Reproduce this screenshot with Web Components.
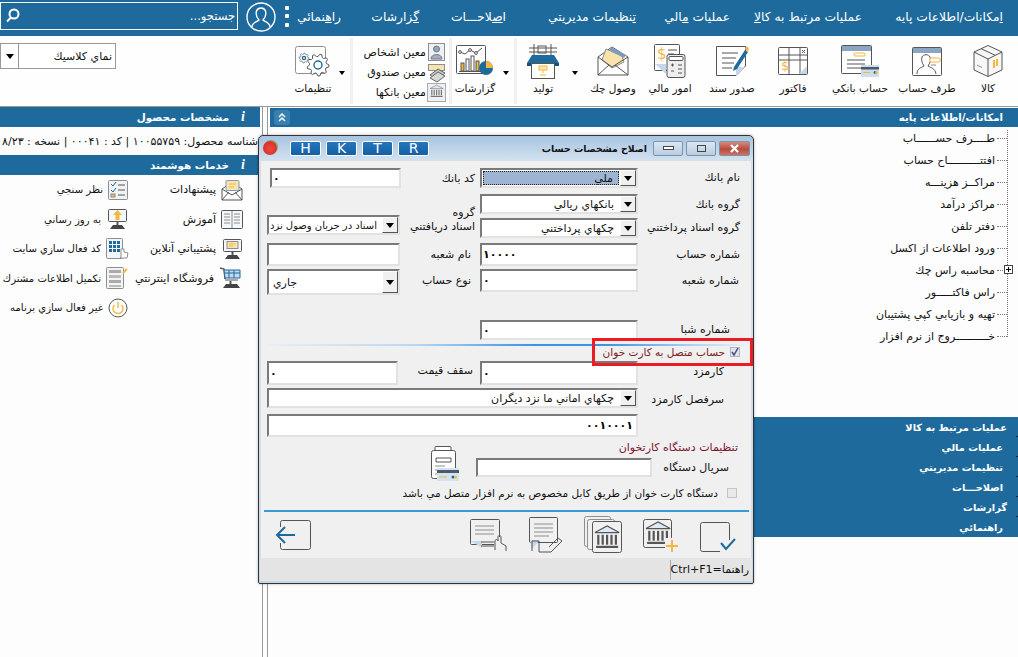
<!DOCTYPE html>
<html dir="rtl" lang="fa">
<head>
<meta charset="utf-8">
<title>حساب</title>
<style>
html,body{margin:0;padding:0;width:1018px;height:657px;overflow:hidden;background:#fdfdfd;font:11px "DejaVu Sans",sans-serif;color:#111}
</style>
</head>
<body>
<x-app>
  <x-topbar>
    <x-menu-item style="width:141px"><u>ا</u>مكانات/اطلاعات پايه</x-menu-item>
    <x-menu-item style="width:132px">عمليات مرتبط به كا<u>لا</u></x-menu-item>
    <x-menu-item style="width:94px">عمليات <u>م</u>الي</x-menu-item>
    <x-menu-item style="width:130px"><u>ت</u>نظيمات مديريتي</x-menu-item>
    <x-menu-item style="width:87px">ا<u>ص</u>لاحـــات</x-menu-item>
    <x-menu-item style="width:78px"><u>گ</u>زارشات</x-menu-item>
    <x-menu-item style="width:51px">را<u>ه</u>نمائي</x-menu-item>
    <x-userbox></x-userbox>
    <x-search>جستجو...</x-search>
  </x-topbar>
  <x-toolbar>
    <x-tool style="width:60px" icon="box">كالا</x-tool>
    <x-tool style="width:62px" icon="person">طرف حساب</x-tool>
    <x-tool style="width:72px" icon="bankacc">حساب بانكي</x-tool>
    <x-tool style="width:62px" icon="invoice">فاكتور</x-tool>
    <x-tool style="width:60px" icon="voucher">صدور سند</x-tool>
    <x-tool style="width:64px" icon="finance">امور مالي</x-tool>
    <x-tool style="width:50px" icon="envelope">وصول چك</x-tool>
    <x-caret style="width:26px"></x-caret>
    <x-tool style="width:38px" icon="shop">توليد</x-tool>
    <x-sep style="margin-right:7px"></x-sep>
    <x-caret style="width:16px"></x-caret>
    <x-tool style="width:46px" icon="reports">گزارشات</x-tool>
    <x-sep></x-sep>
    <x-mini-group>
      <x-mini icon="mperson">معين اشخاص</x-mini>
      <x-mini icon="mcash">معين صندوق</x-mini>
      <x-mini icon="mbank">معين بانكها</x-mini>
    </x-mini-group>
    <x-sep></x-sep>
    <x-caret style="width:16px"></x-caret>
    <x-tool style="width:42px" icon="settings">تنظيمات</x-tool>
    <x-combo class="theme" style="margin-inline-start:auto;align-self:start;margin-top:7px;width:116px;height:26px">نماي كلاسيك</x-combo>
  </x-toolbar>
  <x-workspace>
    <x-right-panel>
      <x-panel-head>امكانات/اطلاعات پايه<x-collapse slot="end"></x-collapse></x-panel-head>
      <x-tree>
        <x-tree-item>طــــرف حســــــاب</x-tree-item>
        <x-tree-item>افتتــــــــــاح حساب</x-tree-item>
        <x-tree-item>مراكــز هزينـــه</x-tree-item>
        <x-tree-item>مراكز درآمد</x-tree-item>
        <x-tree-item>دفتر تلفن</x-tree-item>
        <x-tree-item>ورود اطلاعات از اكسل</x-tree-item>
        <x-tree-item plus>محاسبه راس چك</x-tree-item>
        <x-tree-item>راس فاكتـــــور</x-tree-item>
        <x-tree-item>تهيه و بازيابي كپي پشتيبان</x-tree-item>
        <x-tree-item>خــــــــــروج از نرم افزار</x-tree-item>
      </x-tree>
      <x-accordion>
        <x-acc-row style="padding-right:11px">عمليات مرتبط به كالا</x-acc-row>
        <x-acc-row style="padding-right:15px">عمليات مالي</x-acc-row>
        <x-acc-row style="padding-right:15px">تنظيمات مديريتي</x-acc-row>
        <x-acc-row style="padding-right:15px">اصلاحـــات</x-acc-row>
        <x-acc-row style="padding-right:11px">گزارشات</x-acc-row>
        <x-acc-row style="padding-right:15px;background:none">راهنمائي</x-acc-row>
      </x-accordion>
    </x-right-panel>
    <x-splitter></x-splitter>
    <x-left-panel>
      <x-info-head>مشخصات محصول</x-info-head>
      <x-product>شناسه محصول: ۱۰۰۵۵۷۵۹ | كد : ۰۰۰۴۱ | نسخه : ۱۴۰۰/۰۸/۲۳</x-product>
      <x-info-head>خدمات هوشمند</x-info-head>
      <x-services>
        <x-service icon="sugg">پيشنهادات</x-service>
        <x-service class="l" icon="poll">نظر سنجي</x-service>
        <x-service icon="book">آموزش</x-service>
        <x-service class="l" icon="update">به روز رساني</x-service>
        <x-service icon="support">پشتيباني آنلاين</x-service>
        <x-service class="l" icon="keypad">كد فعال سازي سايت</x-service>
        <x-service icon="cart">فروشگاه اينترنتي</x-service>
        <x-service class="l" icon="stack">تكميل اطلاعات مشترك</x-service>
        <span></span>
        <x-service class="l" icon="power">غير فعال سازي برنامه</x-service>
      </x-services>
    </x-left-panel>
  </x-workspace>
  <x-dialog>
    <x-form>
      <x-lab style="padding-top:3px">نام بانك</x-lab>
      <x-combo class="sel" style="height:20px">ملي</x-combo>
      <x-lab class="m" style="padding-top:4px">كد بانك</x-lab>
      <x-input style="margin:0 -1px 0 0;height:20px;width:131px">۰</x-input>

      <x-lab style="padding-top:7px">گروه بانك</x-lab>
      <x-combo style="margin-top:3px;height:20px">بانكهاي ريالي</x-combo>
      <x-lab class="m" style="grid-row:span 2;padding-top:15px;line-height:14px">گروه<br>اسناد دريافتني</x-lab>
      <span></span>

      <x-lab style="padding-top:5px">گروه اسناد پرداختني</x-lab>
      <x-combo style="margin-top:2px;height:20px">چكهاي پرداختني</x-combo>
      <x-combo class="tight" style="margin-top:-1px;height:20px;font-size:10px">اسناد در جريان وصول نزد</x-combo>

      <x-lab style="padding-top:7px">شماره حساب</x-lab>
      <x-input style="margin-top:2px;height:23px">۱۰۰۰۰</x-input>
      <x-lab class="m" style="padding-top:7px;padding-right:9px">نام شعبه</x-lab>
      <x-input class="blank" style="margin-top:2px;height:23px"></x-input>

      <x-lab style="padding-top:7px;padding-right:9px">شماره شعبه</x-lab>
      <x-input style="margin-top:2px;height:23px">۰</x-input>
      <x-lab class="m" style="padding-top:7px;padding-right:9px">نوع حساب</x-lab>
      <x-combo class="start" style="margin-top:2px;height:26px">جاري</x-combo>

      <span style="grid-column:1/-1"></span>

      <x-lab style="padding-top:5px;padding-right:18px">شماره شبا</x-lab>
      <x-input style="margin-top:2px;height:20px">۰</x-input>
      <span></span><span></span>

      <x-divider></x-divider>
      <span style="grid-column:1/-1"></span>

      <x-lab style="padding-top:4px;padding-right:24px">كارمزد</x-lab>
      <x-input style="height:24px">۰</x-input>
      <x-lab class="m" style="padding-top:3px;padding-right:7px">سقف قيمت</x-lab>
      <x-input style="height:24px;margin-right:2px">۰</x-input>

      <x-lab style="padding-top:5px;padding-right:24px">سرفصل كارمزد</x-lab>
      <x-combo class="wide" style="margin-top:0;height:20px;grid-column:2/5">چكهاي اماني ما نزد ديگران</x-combo>

      <span></span>
      <x-input class="wide end" style="height:23px;grid-column:2/5">۰۰۱۰۰۰۱</x-input>
    </x-form>
    <x-card-section>
      <x-section-title>تنظيمات دستگاه كارتخوان</x-section-title>
      <x-serial-row>
        <x-lab style="width:77px;padding:3px 22px 0 0;box-sizing:content-box">سريال دستگاه</x-lab>
        <x-input class="blank" style="width:176px;height:19px"></x-input>
        <x-icon name="pos" style="margin:-12px 17px -12px 0"></x-icon>
      </x-serial-row>
      <x-check style="margin:10px 14px 0 0">دستگاه كارت خوان از طريق كابل مخصوص به نرم افزار متصل مي باشد</x-check>
    </x-card-section>
    <x-actions>
      <x-icon name="ok"></x-icon>
      <x-icon name="bankadd"></x-icon>
      <x-icon name="bankcopy"></x-icon>
      <x-icon name="docpen"></x-icon>
      <x-icon name="dochand"></x-icon>
      <x-icon name="back" style="margin-inline-start:auto"></x-icon>
    </x-actions>
    <x-statusbar>راهنما=Ctrl+F1</x-statusbar>
    <x-highlight slot="over"><x-check checked class="red">حساب متصل به كارت خوان</x-check></x-highlight>
  </x-dialog>
</x-app>
<script>
const S='#555',B='#1f6a9c',O='#f4b73f',L='#c6d7ec',G='#8e8e8e';
const line=(d,c=S,w=1)=>`<path d="${d}" fill="none" stroke="${c}" stroke-width="${w}"/>`;
const rect=(x,y,w,h,f='none',c=S,r=1)=>`<rect x="${x}" y="${y}" width="${w}" height="${h}" rx="${r}" fill="${f}" stroke="${c}"/>`;
const fill=(x,y,w,h,f)=>`<rect x="${x}" y="${y}" width="${w}" height="${h}" fill="${f}"/>`;
const dollar=(x,y,s=13)=>`<text x="${x}" y="${y}" font-size="${s}" font-family="DejaVu Sans" fill="${O}" direction="ltr">$</text>`;
function bank(x,y,s=1,c=S){let m=`<g transform="translate(${x} ${y}) scale(${s})"><path d="M0 6L11 0L22 6Z" fill="#dfe9f4" stroke="${c}"/>`;
  for(let i=0;i<5;i++)m+=`<path d="M${3+i*4} 8V17" stroke="${c}" stroke-width="2"/>`;
  return m+`<path d="M1 19H21" stroke="${c}" stroke-width="2"/></g>`;}
function gear(cx,cy,ro,ri,n,c,hole){let p=[];for(let i=0;i<n*4;i++){const a=i/(n*4)*Math.PI*2;const r=(i%4<2)?ro:ri;p.push((cx+r*Math.cos(a)).toFixed(1)+','+(cy+r*Math.sin(a)).toFixed(1));}
  return `<polygon points="${p.join(' ')}" fill="#fff" stroke="${c}"/><circle cx="${cx}" cy="${cy}" r="${hole}" fill="#fff" stroke="${B}" stroke-width="1.4"/>`;}
function monitor(inner){return rect(2.5,1.5,18,12,'#f4f7fb',S)+inner+line('M11.5 14V17',S,2)+`<path d="M4 21L7 17H16L19 21Z" fill="#444"/>`;}
const card=(x,y,w=18,h=11)=>fill(x,y,w,h,'#cfdcec')+fill(x,y+2,w,2.5,'#4a5a6a')+fill(x+2,y+7,7,1,O)+`<circle cx="${x+w-4}" cy="${y+7.5}" r="1.4" fill="${B}"/><circle cx="${x+w-2.5}" cy="${y+7.5}" r="1.4" fill="${O}"/>`;
const ICONS={
 box:[30,34,`<path d="M15 1.5L29 8V26L15 32.5L1 26V8Z" fill="#f7f7f7" stroke="${S}"/>`+line('M1 8L15 15L29 8M15 15V32.5M8 4.7L22 11.2')+line('M21 16V24M24 15V22',O,2)+line('M4 21L9 23.5',G)],
 person:[30,30,rect(.5,1.5,29,28,'#fff')+fill(1,2,28,5,'#8aa5c6')+line('M5 28C5 22 9 22 12 20C10 17 9 14 10 11C11 8 17 8 18 11C19 14 18 17 16 20C19 22 23 22 24 28')+rect(18,12,10,4,'#fff',O,1)+line('M19 19H24',G)],
 bankacc:[38,34,rect(.5,1.5,30,28,'#fff')+fill(1,2,29,5,'#8aa5c6')+rect(13,9,11,3,'#fff',O,1)+line('M6 16H24M6 20H24M6 24H20')+card(20,21,18,12)],
 invoice:[30,30,rect(.5,1.5,29,27,'#fff')+line('M1 9H29M1 14H29M11 2V28M22 2V28')+line('M24 4L27 7M27 4L24 7')+dollar(3,24,13)+`<path d="M29 20V28H21Z" fill="${L}"/>`],
 voucher:[32,32,`<path d="M.5 1.5H29.5V21L20 30.5H.5Z" fill="#fff" stroke="${S}"/><path d="M20 22H29L20 31Z" fill="${L}"/>`+line('M6 8H22M6 13H20M6 18H18M6 23H16')+`<path d="M18 22L29 5L32 7L21 24L17 26Z" fill="${B}"/><path d="M29 4L30 1L33 3L32 7Z" fill="${O}"/>`],
 finance:[32,34,rect(.5,.5,25,26,'#fff')+dollar(3,15,15)+line('M14 6H23M14 10H20')+`<path d="M1 20H12V30Z" fill="${L}"/>`+rect(13,10.5,18,23,'#eee',S,2)+rect(15,12.5,14,4,'#fff')+line('M17 21H20M18.5 19.5V22.5M24 21H28M17 27H20M24 25H28M24 29H28')],
 envelope:[32,34,`<path d="M1 13L15 3L31 13V31H1Z" fill="#fff" stroke="${S}"/>`+`<path d="M5 16L9 5L25 12L27 18L15 24Z" fill="#f9e3ad" stroke="${G}"/>`+`<path d="M14 3L29 11L27 14L12 6Z" fill="#7b9cc0"/>`+line('M1 13L15 23L31 13M1 31L12 21M31 31L18 21')],
 shop:[34,36,line('M8 1V14M25 1V14M3 5H31M3 9H31')+rect(12,3,8,7,'none',S,0)+`<path d="M6 12H28L33 20H1Z" fill="${B}"/><path d="M1 20H6V23H1ZM28 20H33V23H28Z" fill="#16527c"/>`+rect(5.5,20.5,23,15,'#fff',S,0)+rect(13,23,8,4,'#fbe5b0',O,0)+line('M17 27V30M14 32H20',O)],
 reports:[38,34,rect(.5,1.5,29,28,'#fff')+line('M4 8L9 10L14 6L20 9L26 4',S)+`<circle cx="4" cy="8" r="1.4" fill="#fff" stroke="${S}"/><circle cx="14" cy="6" r="1.4" fill="#fff" stroke="${S}"/><circle cx="20" cy="9" r="1.4" fill="#fff" stroke="${S}"/>`+rect(5,19,3,8,O,S,0)+rect(10,15,3,12,'#fff',S,0)+rect(15,12,3,15,'#fff',S,0)+rect(20,17,3,10,O,S,0)+line('M3 27.5H25')+`<circle cx="30" cy="24" r="7" fill="${B}"/><path d="M30 24V17A7 7 0 0 1 37 24Z" fill="${O}"/>`],
 settings:[36,32,rect(.5,1.5,30,27,'#fff',G,2)+gear(23,20,11,8.5,9,S,4)+gear(9,13,5,3.8,8,G,1.6)],
 mperson:[19,19,rect(1.5,.5,16,17,'#eef0f3',G,0)+`<circle cx="9.5" cy="6" r="3" fill="#8fa7c4" stroke="#777"/><path d="M4 16C4 10 15 10 15 16Z" fill="#9fb2c9" stroke="#777"/>`],
 mcash:[19,19,rect(1.5,1.5,16,6,'#f6e3ad',G,0)+`<path d="M3 12L11 6L18 10L10 17Z" fill="#bfc6c2" stroke="#666"/><path d="M3 15L11 9L18 13L10 19Z" fill="#d5dad5" stroke="#666"/>`],
 mbank:[19,19,rect(.5,.5,18,18,'#eef0f3','#aaa',0)+bank(3,2,.6,'#777')],
 sugg:[22,22,`<path d="M1 10L11 3L21 10V21H1Z" fill="#fff" stroke="${S}"/>`+rect(5,1.5,13,10,'#f9e3ad','#7b9cc0',1)+line('M8 5H15M8 8H13',O)+line('M1 10L11 16L21 10M1 21L8 13M21 21L14 13')],
 poll:[20,20,rect(.5,.5,19,19,'#f0f2f5',G,1)+line('M3 4L5 6L8 2',B)+line('M3 10L5 12L8 8',B)+rect(3,14,4,3,O,G,0)+line('M10 5H17M10 10H17M10 15H17')],
 book:[22,20,rect(.5,1.5,21,18,'#f3f6fa',S,1)+line('M11 2V19M3 5H9M3 8H9M3 11H9M3 14H9M13 5H19M13 8H19M13 11H19M13 14H19',G)],
 update:[22,22,monitor(`<path d="M11.5 2L16 7H13.5V12H9.5V7H7Z" fill="${O}"/>`)],
 support:[22,22,monitor(rect(6,3.5,11,7,'#f9e3ad',G,0)+line('M8 6H14M8 8H12',O))],
 keypad:[22,22,rect(.5,.5,16,20,'#f2f5f9',G,1)+[3,7,11].flatMap(y=>[3,7,11].map(x=>fill(x,y,3,3,B))).join('')+`<path d="M15 11V19L14 20H21L22 15L18 14V11Z" fill="#fff" stroke="${G}"/>`],
 cart:[24,22,line('M1 1L5 2L6 12',S,1.5)+`<path d="M5 3H21V11H6Z" fill="${L}" stroke="${B}"/>`+line('M6 6H21M10 3V11M15 3V11',B)+line('M11.5 14V17',S,2)+`<path d="M4 21L7 17H18L21 21Z" fill="#444"/>`+line('M6 13H19',S)],
 stack:[22,22,rect(.5,.5,17,21,'#f3f3f3',G,1)+fill(3,3,12,3,'#aaa')+fill(3,8,12,3,'#bbb')+fill(3,13,12,3,'#aaa')+fill(3,18,12,2,'#bbb')+line('M17 6L21 2',O,2)],
 power:[20,20,`<circle cx="10" cy="10" r="9" fill="#fff" stroke="${S}"/><path d="M6.5 7A5 5 0 1 0 13.5 7" fill="none" stroke="${O}" stroke-width="1.4"/>`+line('M10 4V10',O,1.4)],
 pos:[30,35,rect(6,.5,16,9,'#fff',S,1)+rect(2.5,4.5,24,28,'#fff',S,2)+line('M7 12H22V16H7Z')+line('M6 20H16M6 24H14M6 28H14',G)+fill(8,22,22,13,'#d5e2f0')+fill(8,24,22,3,'#4a5a6a')+line('M10 31H18',O)+`<circle cx="24" cy="31" r="1.5" fill="${B}"/><circle cx="26.5" cy="31" r="1.5" fill="${O}"/>`],
 ok:[36,34,rect(.5,4.5,29,29,'none',S,2)+fill(20,22,16,12,'#f0f0f0')+line('M21 25L26 31L35 21',B,2)],
 bankadd:[36,34,rect(.5,1.5,28,28,'none',S,2)+bank(3,4,1.1)+fill(22,20,14,14,'#f0f0f0')+line('M29 22V34M23 28H35',O,2)],
 bankcopy:[38,38,rect(.5,.5,26,30,'none',G,2)+rect(3.5,3.5,27,30,'#f0f0f0',G,2)+rect(8.5,5.5,29,31,'#f0f0f0',S,2)+bank(11,10,1.1)],
 docpen:[34,36,rect(.5,.5,28,25,'none',S,1)+line('M5 7H24M5 11H24M5 15H24M5 19H20',G)+`<path d="M1 23H11L3 32Z" fill="${L}"/>`+line('M3 34V24H10V35H22L33 24L29 21L20 30',S)],
 dochand:[38,32,rect(.5,.5,29,25,'none',S,1)+line('M5 7H24M5 11H24M5 15H24',G)+`<path d="M1 22H12L12 29Z" fill="${L}"/>`+line('M11 23H24M11 27H24',S)+fill(24,18,14,14,'#f0f0f0')+line('M25 31V22C25 20 28 20 28 22V18C28 16 31 16 31 18V24L36 27V32',S)],
 back:[35,30,rect(4.5,.5,30,29,'none',S,2)+fill(0,7,18,16,'#f0f0f0')+line('M1 15H19M9 7L1 15L9 23',B,2)],
};
class Base extends HTMLElement{constructor(){super();const c=this.constructor;this.attachShadow({mode:'open'}).innerHTML=`<style>${c.css}</style>${c.html}`;}}
function def(name,css,html='<slot></slot>',extra){const K=class extends Base{static css=css;static html=html;connectedCallback(){extra&&extra(this)}};customElements.define(name,K);}
const setIcon=el=>{const i=el.shadowRoot.querySelector('x-icon');if(i)i.setAttribute('name',el.getAttribute('icon'));};
customElements.define('x-icon',class extends HTMLElement{
  static get observedAttributes(){return['name']}
  constructor(){super();this.attachShadow({mode:'open'});}
  connectedCallback(){this.draw()} attributeChangedCallback(){this.draw()}
  draw(){const d=ICONS[this.getAttribute('name')];if(!d)return;
    this.shadowRoot.innerHTML=`<style>:host{display:block;flex:none;line-height:0}svg{display:block;overflow:visible}</style><svg xmlns="http://www.w3.org/2000/svg" width="${d[0]}" height="${d[1]}" viewBox="0 0 ${d[0]} ${d[1]}">${d[2]}</svg>`;}
});
def('x-app',':host{display:block;position:relative;width:1018px;height:657px;overflow:hidden}','<slot></slot>');
def('x-topbar',':host{display:flex;height:36px;background:#1f6a9c;color:#fff;align-items:center;padding-right:15px;box-sizing:border-box;font-size:12.3px}');
def('x-menu-item',':host{display:block;flex:none;white-space:nowrap;box-sizing:border-box;margin-top:-3px}');
def('x-userbox',':host{display:flex;align-items:center;flex:none;gap:9px;width:52px;height:36px;padding-right:1px;box-sizing:border-box}',
 `<svg width="4" height="22" viewBox="0 0 4 22" style="margin-top:-2px"><rect width="4" height="4" y="0" rx="1" fill="#fff"/><rect width="4" height="4" y="8" rx="1" fill="#fff"/><rect width="4" height="4" y="17" rx="1" fill="#fff"/></svg>
  <svg width="30" height="30" viewBox="0 0 30 30" style="margin-top:-3px"><circle cx="15" cy="15" r="14" fill="none" stroke="#fff" stroke-width="1.4"/><path d="M6 25C6 20 11 20 13 18C10 15 10 11 10.500 9C12 5 18 5 19.500 9C20 11 20 15 17 18C19 20 24 20 24 25" fill="none" stroke="#fff" stroke-width="1.4"/></svg>`);
def('x-search',':host{display:flex;align-items:center;justify-content:space-between;flex:none;box-sizing:border-box;width:238px;height:28px;margin-top:-5px;border:1px solid #fff;padding:0 2px 0 4px;font-size:11.5px}',
 `<slot></slot><svg width="15" height="15" viewBox="0 0 15 15"><circle cx="9" cy="6" r="4.500" fill="none" stroke="#fff" stroke-width="2"/><path d="M6 9.500L2 13.500" stroke="#fff" stroke-width="2"/></svg>`);
def('x-toolbar',':host{display:flex;height:70px;background:#fefefe;border-bottom:1px solid #999}');
def('x-tool',':host{display:flex;flex-direction:column;align-items:center;flex:none;height:70px;position:relative}.i{height:38px;margin-top:6px;display:flex;align-items:center;justify-content:center}.t{position:absolute;top:46px;white-space:nowrap;left:50%;transform:translateX(-50%);font-size:10.5px}',
 '<div class="i"><x-icon></x-icon></div><div class="t"><slot></slot></div>',setIcon);
def('x-caret',':host{display:flex;flex:none;justify-content:center;padding-top:35px;box-sizing:border-box}i{width:0;height:0;border:3.5px solid transparent;border-top:4px solid #000;border-bottom:0}','<i></i>');
def('x-sep',':host{display:block;flex:none;width:3px;height:66px;margin:2px 0;background:#f1f1f1}','');
def('x-mini-group',':host{display:flex;flex-direction:column;flex:none;width:96px;padding-top:6px;box-sizing:border-box}');
def('x-mini',':host{display:flex;align-items:center;gap:1px;height:20px;padding-right:3px;white-space:nowrap;font-size:11px}','<x-icon></x-icon><slot></slot>',setIcon);
def('x-workspace',':host{display:flex;height:550px}');
def('x-right-panel',':host{display:flex;flex-direction:column;flex:1;min-width:0;padding-top:1px;box-sizing:border-box}');
def('x-panel-head',':host{display:flex;justify-content:space-between;align-items:center;flex:none;height:19px;background:#1f6a9c;color:#fff;font-weight:bold;padding:0 15px 0 4px;font-size:10.2px}','<span><slot></slot></span><slot name="end"></slot>');
def('x-collapse',':host{display:block;width:16px;height:15px;border-radius:3px;background:#3a80ae}',
 '<svg width="16" height="15" viewBox="0 0 16 15"><path d="M5 7L8 4L11 7M5 11L8 8L11 11" fill="none" stroke="#fff" stroke-width="1.5"/></svg>');
def('x-tree',':host{display:block;flex:none;height:220px;background:repeating-linear-gradient(#777 0 1px,transparent 1px 2px) right 10px top 3px/1px 207px no-repeat}');
def('x-tree-item',':host{display:flex;align-items:center;height:22px;padding-right:11px;position:relative;white-space:nowrap;font-size:11px}.c{width:10px;height:0;border-top:1px dotted #777;margin-left:2px;flex:none}.p{display:none;position:absolute;right:5px;top:6px;width:9px;height:9px;box-sizing:border-box;border:1px solid #444;background:#fff}:host([plus]) .p{display:block}.p:before{content:"";position:absolute;left:1px;right:1px;top:3px;height:1px;background:#000}.p:after{content:"";position:absolute;top:1px;bottom:1px;left:3px;width:1px;background:#000}',
 '<span class="c"></span><slot></slot><span class="p"></span>');
def('x-accordion',':host{display:block;flex:none;margin-top:70px;background:#1f6a9c;color:#fff;font-weight:bold;font-size:9.8px}');
def('x-acc-row',':host{display:flex;align-items:center;height:20px;white-space:nowrap;background:linear-gradient(#123,#123) right 0 bottom 0/2px 1px no-repeat}');
def('x-splitter',':host{display:block;flex:none;width:10px;background:linear-gradient(#999,#999) 2px 0/1px 100% no-repeat,linear-gradient(#999,#999) 7px 0/1px 100% no-repeat}','');
def('x-left-panel',':host{display:block;flex:none;width:260px;overflow:hidden}');
def('x-info-head',':host{display:flex;align-items:center;height:20px;background:#1f6a9c;color:#fff;font-weight:bold;font-size:10.4px;padding-right:15px;gap:12px;white-space:nowrap}b{font:italic bold 14px "Liberation Serif",serif;margin-top:-1px}','<b>i</b><slot></slot>');
def('x-product',':host{display:flex;align-items:center;height:28px;padding-right:2px;white-space:nowrap;font-size:11px}');
def('x-services',':host{display:grid;grid-template-columns:115px 115px;grid-auto-rows:29.5px;padding-right:17px}');
def('x-service',':host{display:flex;align-items:center;gap:5px;white-space:nowrap;min-width:0;font-size:11px}:host(.l){font-size:10.1px}','<x-icon></x-icon><slot></slot>',setIcon);
def('x-dialog',`:host{position:absolute;left:258px;top:135px;width:496px;height:449px;box-sizing:border-box;border:1px solid #333;border-radius:5px 5px 2px 2px;background:linear-gradient(#a8c4e0,#d3e2f0 25px,#c5d9ec);display:flex;flex-direction:column;box-shadow:0 0 3px rgba(0,0,0,.3)}
 .title{display:flex;align-items:center;height:24px;flex:none;padding:0 3px 0 4px;gap:3px}
 .title .cap{font-weight:bold;font-size:9.3px;white-space:nowrap;margin-right:3px}
 .wb{display:flex;align-items:center;justify-content:center;width:30px;height:15px;border:1px solid #7f93a8;border-radius:2px;background:linear-gradient(#dbe7f2,#b9cde0);box-sizing:border-box}
 .wb.x{background:linear-gradient(#d48a80,#b94b3c 55%,#c97468);width:31px}
 .hk{display:flex;gap:5px;margin-right:auto}
 .hk span{display:flex;align-items:center;justify-content:center;width:31px;height:15px;border:1px solid #fff;border-radius:2px;color:#fff;font:14px "DejaVu Sans";box-sizing:border-box;background:linear-gradient(#2676bd,#155fa3)}
 .ball{width:14px;height:14px;border-radius:50%;background:radial-gradient(circle at 50% 55%,#f04a3e,#c9281f);margin-right:10px;box-shadow:1px -1px 0 #7fae5a}
 .body{flex:1;margin:0 1px 2px 1px;background:#f0f0f0;border:1px solid #d5dde6;border-bottom:0;position:relative;display:flex;flex-direction:column;padding-top:7px;box-sizing:border-box;min-height:0;border-radius:2px 2px 0 0}`,
 `<div class="title">
   <span class="wb x"><svg width="13" height="9" viewBox="0 0 13 9"><path d="M3 1L10 8M10 1L3 8" stroke="#fff" stroke-width="2.4"/></svg></span>
   <span class="wb"><svg width="9" height="7" viewBox="0 0 9 7"><rect x=".5" y=".5" width="8" height="6" fill="none" stroke="#444"/></svg></span>
   <span class="wb"><svg width="11" height="4" viewBox="0 0 11 4"><rect x=".5" y=".5" width="10" height="3" fill="#fff" stroke="#444"/></svg></span>
   <span class="cap">اصلاح مشخصات حساب</span>
   <span class="hk"><span>R</span><span>T</span><span>K</span><span>H</span></span>
   <span class="ball"></span>
  </div>
  <div class="body"><slot></slot><slot name="over"></slot></div>`);
def('x-form',':host{display:grid;grid-template-columns:110px 158px 80px 133px;grid-template-rows:23px 25px 25px 26px 30px 21px 26px 2px 15px 27px 26px 26px;padding-right:3px;flex:none;align-content:start}');
def('x-lab',':host{display:block;white-space:nowrap;padding-right:8px;font-size:11px;box-sizing:border-box;line-height:14px}:host(.m){padding-right:5px}');
const fieldCss=`:host{display:flex;box-sizing:border-box;background:#fff;border:2px solid;border-color:#7a7a7a #e2e2e2 #e2e2e2 #7a7a7a;min-width:0;white-space:nowrap;font-size:11px;overflow:hidden}`;
def('x-input',fieldCss+`:host{align-items:center;direction:ltr;padding:0 1px;color:#000;letter-spacing:-1px;font-weight:bold}:host(.end){justify-content:flex-end;letter-spacing:3px;padding-right:3px}`);
def('x-combo',fieldCss+`:host{align-items:stretch}
 .b{flex:none;width:16px;background:#f0f0f0;border:1px solid;border-color:#fff #555 #555 #fff;display:flex;align-items:center;justify-content:center;box-sizing:border-box}
 .b i{width:0;height:0;border:4px solid transparent;border-top:5px solid #000;border-bottom:0}
 .t{flex:1;display:flex;align-items:center;padding:0 6px 0 0;overflow:hidden;min-width:0}
 :host(.sel) .t{background:#9db4d2;outline:1px dotted #222;outline-offset:-1px;margin:1px}
 :host(.tight) .t{padding-right:5px}
 :host(.start) .t{justify-content:flex-end;padding-left:4px}
 :host(.theme){border:1px solid #999}
 :host(.theme) .b{order:2;width:18px;border:0;border-right:1px solid #999;background:#fff}
 :host(.theme) .t{padding-right:3px}`,
 `<span class="b"><i></i></span><span class="t"><slot></slot></span>`);
def('x-divider',':host{display:block;grid-column:1/-1;height:2px;margin-right:-3px;background:linear-gradient(to right,#e8eef5,#bcd8f2 30%,#3a93e6 55%,#3a93e6 70%,#bcd8f2 90%,#eef2f6)}','');
def('x-card-section',':host{display:block;flex:none;height:70px;padding-top:1px;box-sizing:border-box}');
def('x-section-title',':host{display:block;color:#7c1430;font-size:11px;padding-right:13px;line-height:14px;white-space:nowrap}');
def('x-serial-row',':host{display:flex;align-items:flex-start;margin-top:3px}');
def('x-check',':host{display:flex;align-items:center;gap:9px;white-space:nowrap;font-size:10.5px}:host(.red){color:#7a2020;gap:5px}.c{flex:none;width:10px;height:10px;box-sizing:border-box;border:1px solid #c4c4c4;background:#e9e9e9;display:flex}svg{display:none}:host([checked]) svg{display:block}:host([checked]) .c{background:#dfe3ea;border-color:#aeb6c4}',
 '<span class="c"><svg width="8" height="8" viewBox="0 0 8 8"><path d="M1 4L3 7L7 0" fill="none" stroke="#45507a" stroke-width="1.5"/></svg></span><slot></slot>');
def('x-actions',':host{display:flex;align-items:center;gap:21px;flex:none;height:46px;border-top:2px solid #3a9ad9;margin:0 2px 0 3px;padding:0 13px 0 12px}');
def('x-statusbar',':host{display:flex;align-items:center;flex:none;height:23px;background:#e4e4e4;padding-right:3px;font-size:11px;white-space:nowrap;margin:0 -1px}span{border-left:1px solid #aaa;padding-left:2px;height:20px;display:flex;align-items:center;width:76px}','<span><slot></slot></span>');
def('x-highlight',':host{display:flex;align-items:center;position:absolute;right:-2px;top:177px;width:161px;height:28px;box-sizing:border-box;border:3px solid #ed1c24;padding-right:10px}');
</script>
</body>
</html>
